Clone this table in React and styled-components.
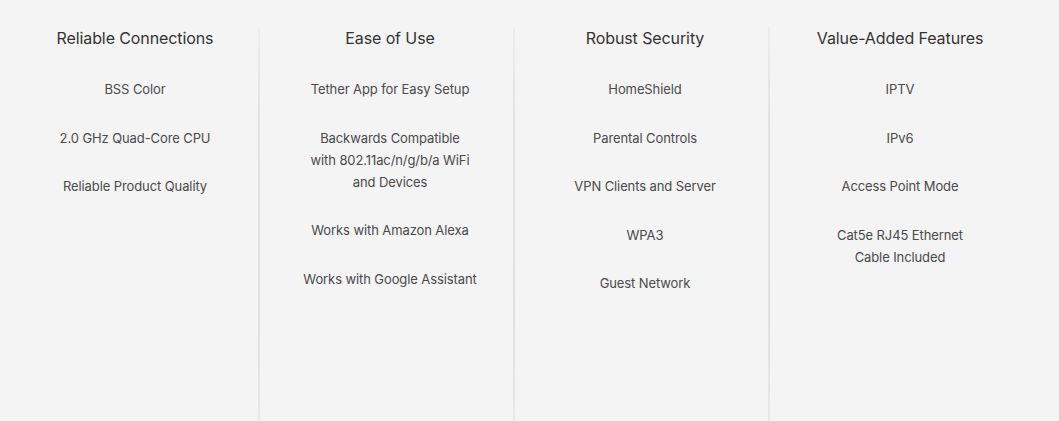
import React from "react";
import styled, { createGlobalStyle } from "styled-components";

const Global = createGlobalStyle`
  html, body { margin: 0; padding: 0; background: #f4f4f4; }
  body { font-family: Inter, "Noto Sans", "Liberation Sans", sans-serif; -webkit-font-smoothing: antialiased; }
`;

const Page = styled.div`
  width: 1059px;
  height: 421px;
  background: #f4f4f4;
  box-sizing: border-box;
  padding-left: 3px;
  display: flex;
  align-items: stretch;
  overflow: hidden;
`;

const Column = styled.section`
  position: relative;
  width: 255px;
  flex: 0 0 255px;
  box-sizing: border-box;
  padding: 27px 0 0 9px;
  display: flex;
  flex-direction: column;
  align-items: center;
  text-align: center;

  ${(p) =>
    p.$divider &&
    `
    &::before {
      content: "";
      position: absolute;
      left: 0;
      top: 27px;
      bottom: 0;
      width: 2px;
      background: linear-gradient(to bottom, rgba(220,220,220,0.3) 0%, #e2e2e2 25%, #e0e0e0 75%, #e9e9e9 100%);
    }
  `}
`;

const Heading = styled.h3`
  margin: 0 0 29px;
  font-size: 16px;
  font-weight: 400;
  line-height: 22px;
  color: #333;
  letter-spacing: -0.1px;
  white-space: nowrap;
`;

const List = styled.ul`
  list-style: none;
  margin: 0;
  padding: 0;
  display: flex;
  flex-direction: column;
  align-items: center;
  gap: 26.5px;
`;

const Item = styled.li`
  font-size: 13px;
  font-weight: 400;
  line-height: 22px;
  color: #4a4a4a;
  white-space: nowrap;
  letter-spacing: -0.1px;
`;

const data = [
  {
    title: "Reliable Connections",
    items: ["BSS Color", "2.0 GHz Quad-Core CPU", "Reliable Product Quality"],
  },
  {
    title: "Ease of Use",
    items: [
      "Tether App for Easy Setup",
      ["Backwards Compatible", "with 802.11ac/n/g/b/a WiFi", "and Devices"],
      "Works with Amazon Alexa",
      "Works with Google Assistant",
    ],
  },
  {
    title: "Robust Security",
    items: [
      "HomeShield",
      "Parental Controls",
      "VPN Clients and Server",
      "WPA3",
      "Guest Network",
    ],
  },
  {
    title: "Value-Added Features",
    items: [
      "IPTV",
      "IPv6",
      "Access Point Mode",
      ["Cat5e RJ45 Ethernet", "Cable Included"],
    ],
  },
];

export default function App() {
  return (
    <>
      <Global />
      <Page>
        {data.map((col, i) => (
          <Column key={col.title} $divider={i > 0}>
            <Heading>{col.title}</Heading>
            <List>
              {col.items.map((it, j) => (
                <Item key={j}>
                  {Array.isArray(it)
                    ? it.map((line, k) => (
                        <React.Fragment key={k}>
                          {k > 0 && <br />}
                          {line}
                        </React.Fragment>
                      ))
                    : it}
                </Item>
              ))}
            </List>
          </Column>
        ))}
      </Page>
    </>
  );
}
